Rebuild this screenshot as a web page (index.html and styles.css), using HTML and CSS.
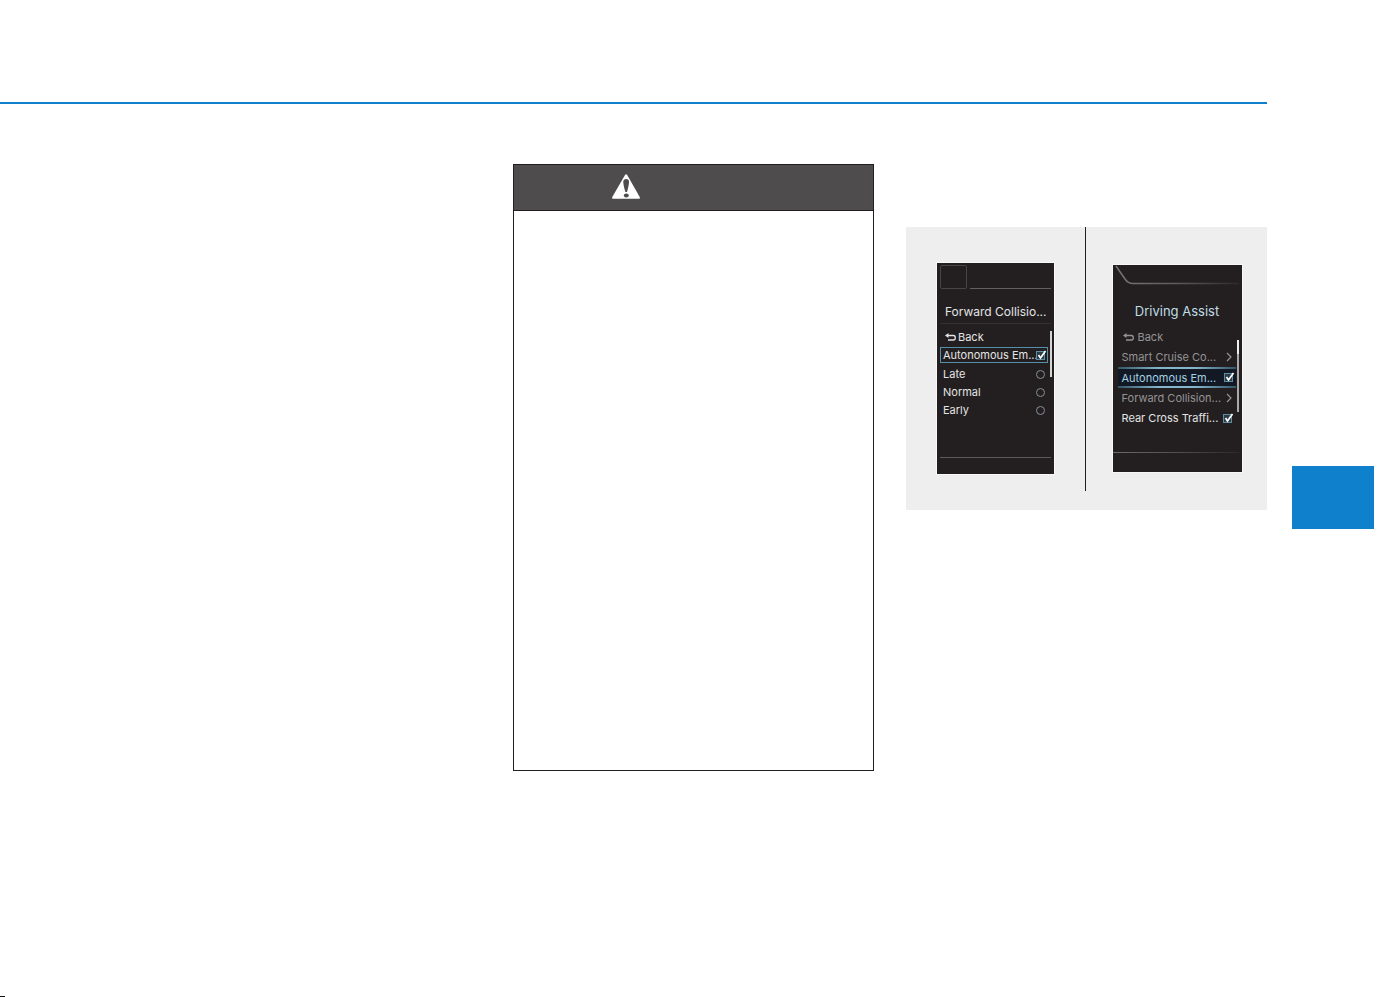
FILE: index.html
```html
<!DOCTYPE html>
<html lang="en">
<head>
<meta charset="utf-8">
<title>Driving Assist</title>
<link rel="stylesheet" href="styles.css">
</head>
<body>
<header class="page-head"></header>
<main class="page">
  <section class="warning">
    <div class="warning-head">
      <svg class="warning-icon" viewBox="0 0 28 26" aria-hidden="true">
        <path class="tri" d="M13 1Q14 -0.500 15.200 1L28 23.500Q28 24.800 27 24.800H1Q0 24.800 0 23.500Z"/>
        <path class="bang" d="M11.300 7.500Q11.500 5 14.200 5Q17 5 17 7.500Q17 11 15 18H13.400Q11.200 11 11.300 7.500Z"/>
        <ellipse class="bang" cx="14.300" cy="21.500" rx="2.500" ry="2"/>
      </svg>
    </div>
    <div class="warning-body"></div>
  </section>

  <figure class="figure">
    <div class="pane pane-left">
      <div class="screen screen-a">
        <div class="a-top"><span class="a-tab"></span><span class="a-line"></span></div>
        <h2 class="a-title">Forward Collisio...</h2>
        <div class="menu">
          <button class="row back" type="button">
            <svg class="back-icon" viewBox="0 0 11 9" aria-hidden="true"><path d="M2 2.500H8.500Q10.300 2.500 10.300 4.800Q10.300 7 8.500 7H3"/><path class="head" d="M0 2.500L3.500 0V5Z"/></svg>
            Back
          </button>
          <label class="row selected">Autonomous Em...
            <span class="check"><input type="checkbox" checked><svg viewBox="0 0 11 11" aria-hidden="true"><path d="M2.500 5L4.500 8L9.500 1"/></svg></span>
          </label>
          <label class="row">Late<input class="radio" type="radio" name="timing"></label>
          <label class="row">Normal<input class="radio" type="radio" name="timing"></label>
          <label class="row">Early<input class="radio" type="radio" name="timing"></label>
          <span class="scroll"></span>
        </div>
        <div class="base-line"></div>
      </div>
    </div>
    <div class="pane">
      <div class="screen screen-b">
        <svg class="b-top" viewBox="0 0 129 22" aria-hidden="true">
          <defs><linearGradient id="fade" gradientUnits="userSpaceOnUse" x1="0" y1="0" x2="129" y2="0"><stop offset="0" stop-color="#77777a"/><stop offset=".5" stop-color="#5c5a5c"/><stop offset="1" stop-color="#2c282a"/></linearGradient></defs>
          <path d="M3 1L12 14Q15 18.500 20 18.500H126" fill="none" stroke="url(#fade)" stroke-width="1.500"/>
        </svg>
        <h2 class="b-title">Driving Assist</h2>
        <div class="menu">
          <button class="row back dim" type="button">
            <svg class="back-icon" viewBox="0 0 11 9" aria-hidden="true"><path d="M2 2.500H8.500Q10.300 2.500 10.300 4.800Q10.300 7 8.500 7H3"/><path class="head" d="M0 2.500L3.500 0V5Z"/></svg>
            Back
          </button>
          <button class="row dim" type="button">Smart Cruise Co...
            <svg class="chevron" viewBox="0 0 6 10" aria-hidden="true"><path d="M1 1L5 5L1 9"/></svg>
          </button>
          <label class="row selected">Autonomous Em...
            <span class="check"><input type="checkbox" checked><svg viewBox="0 0 11 11" aria-hidden="true"><path d="M2.500 5L4.500 8L9.500 1"/></svg></span>
          </label>
          <button class="row dim" type="button">Forward Collision...
            <svg class="chevron" viewBox="0 0 6 10" aria-hidden="true"><path d="M1 1L5 5L1 9"/></svg>
          </button>
          <label class="row">Rear Cross Traffi...
            <span class="check"><input type="checkbox" checked><svg viewBox="0 0 11 11" aria-hidden="true"><path d="M2.500 5L4.500 8L9.500 1"/></svg></span>
          </label>
          <span class="scroll"></span>
        </div>
        <div class="base-line"></div>
      </div>
    </div>
  </figure>

  <aside class="chapter-tab"></aside>
</main>
<footer class="foot-mark"></footer>
</body>
</html>
```
FILE: styles.css
```css
* { box-sizing: border-box; }

body {
  display: flex;
  flex-direction: column;
  min-height: 100vh;
  margin: 0;
  background: #fff;
  font-family: Inter, "Liberation Sans", sans-serif;
}

.page-head {
  height: 104px;
  margin-right: 121px;
  border-bottom: 2px solid #0f80cc;
}

.page {
  display: grid;
  grid-template-columns: 513fr 361fr 32fr 361fr 25fr 82fr 14fr;
  align-items: start;
  flex: 1;
  padding-top: 60px;
}

/* Warning box */
.warning {
  grid-column: 2;
  border: 1px solid #231f20;
}

.warning-head {
  height: 46px;
  padding: 9px 0 0 98px;
  border-bottom: 1px solid #231f20;
  background: #4f4c4d;
}

.warning-icon { display: block; width: 28px; height: 26px; }
.tri { fill: #fff; }
.bang { fill: #4f4c4d; }
.warning-body { min-height: 559px; }

/* Figure with the two cluster displays */
.figure {
  display: grid;
  grid-column: 4;
  grid-template-columns: 180fr 181fr;
  margin: 63px 0 0;
  padding-bottom: 19px;
  background: #eee;
}

.pane {
  display: flex;
  justify-content: center;
  align-items: start;
  min-height: 264px;
  padding: 38px 0 0 1px;
}

.pane-left {
  padding: 36px 0 0;
  border-right: 1px solid #231f20;
}

.screen {
  display: flex;
  flex-direction: column;
  background: #231f20;
  color: #e4e4e4;
  font-size: 11px;
  outline: 1px solid #f8f8f8;
}

.screen-a { width: 117px; height: 211px; padding: 2px 3px 16px; }
.screen-b { width: 129px; height: 207px; padding-bottom: 19px; }

.a-top { display: flex; align-items: end; gap: 3px; height: 24px; }
.a-tab { width: 27px; height: 24px; border: 1px solid #474445; border-radius: 2px; }
.a-line { flex: 1; height: 1px; background: #625f60; }

.a-title, .b-title {
  margin: 0;
  font-weight: 400;
  white-space: nowrap;
}

.a-title {
  height: 35px;
  padding: 15px 0 0 5px;
  border-bottom: 1px solid #353132;
  font-size: 12px;
  line-height: 16px;
}

.b-top { display: block; height: 22px; }

.b-title {
  height: 40px;
  padding-top: 14px;
  color: #bfdde5;
  font-size: 13px;
  line-height: 20px;
  text-align: center;
}

.menu { position: relative; }
.screen-a .menu { padding: 4px 3px 0 0; }
.screen-b .menu { padding: 0 6px 0 5px; }

.row {
  display: flex;
  align-items: center;
  justify-content: space-between;
  width: 100%;
  padding: 0 3px;
  border: 1px solid transparent;
  background: none;
  color: inherit;
  font: inherit;
  white-space: nowrap;
}

.screen-a .row { height: 18px; padding: 0 2px; }
.screen-b .row { height: 20px; }
.screen-a .back { gap: 2px; padding-left: 4px; }
.screen-b .back { gap: 4px; padding-left: 4px; }
.row.back { justify-content: flex-start; }
.dim { color: #959394; }

.screen-a .selected {
  height: 16px;
  margin: 1px 0 2px;
  padding-right: 0;
  border-color: #5590ab;
}

.screen-b .selected {
  height: 21px;
  border-width: 2px 0;
  padding: 0 2px 0 4px;
  border-style: solid;
  border-image: linear-gradient(90deg, #315263, #85b5ca 35%, #85b5ca 65%, #315263) 2;
  background: #121824;
  color: #a5d2e1;
}

.back-icon { width: 11px; height: 9px; fill: none; stroke: currentColor; stroke-width: 1.3; }
.back-icon .head { fill: currentColor; stroke: none; }
.chevron { width: 6px; height: 10px; fill: none; stroke: currentColor; stroke-width: 1.2; }

.check { display: grid; flex: none; width: 11px; height: 11px; }
.check input, .check svg { grid-area: 1 / 1; }

.check input {
  width: 9px;
  height: 9px;
  margin: 1px 0;
  appearance: none;
  border: 1px solid #608da2;
  background: #2a3c46;
}

.check svg { width: 11px; height: 11px; fill: none; stroke: #fff; stroke-width: 1.7; }
.screen-a .check { margin-left: -2px; }
.screen-b label.row { padding-right: 1px; }

.radio {
  width: 9px;
  height: 9px;
  margin: 0;
  appearance: none;
  border: 1px solid #84919a;
  border-radius: 50%;
}

.scroll { position: absolute; width: 2px; background: #d4d4d4; }
.screen-a .scroll { top: 7px; right: -1px; height: 46px; }
.screen-b .scroll {
  top: 13px;
  right: 3px;
  height: 72px;
  background: linear-gradient(#eee 14px, #a9a9aa 14px);
}

.base-line { height: 1px; margin-top: auto; background: #5c595a; }
.screen-b .base-line { margin-right: 3px; background: linear-gradient(90deg, #6b696a, #4c494a 60%, #2c282a); }

.chapter-tab {
  grid-column: 6;
  height: 63px;
  margin-top: 302px;
  background: #0f80cc;
}

.foot-mark { width: 5px; height: 1px; background: #111; }
```
